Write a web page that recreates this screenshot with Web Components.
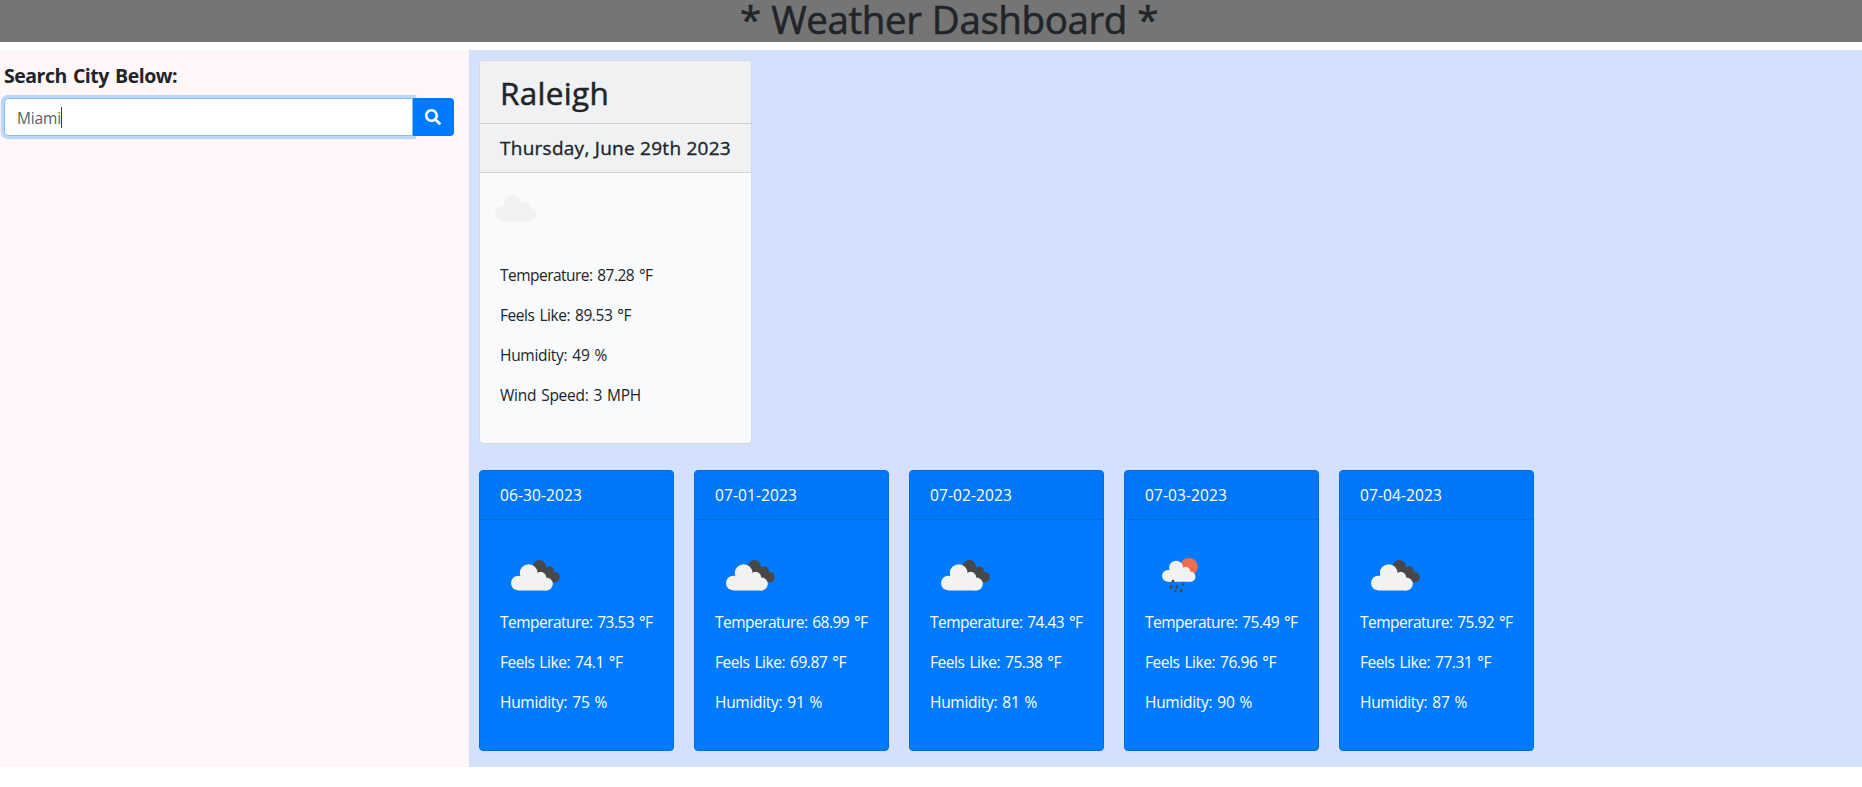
<!DOCTYPE html>
<html lang="en">
<head>
<meta charset="utf-8">
<title>Weather Dashboard</title>
<style>
html,body{margin:0;padding:0;background:#fff;height:787px;overflow:hidden}
body{font:400 16px/24px "Open Sans","Noto Sans",sans-serif;color:#212529}
</style>
</head>
<body>
<weather-app></weather-app>
<script>
// Single line of text whose tracking is adjusted to a set advance width.
class FitText extends HTMLElement{
  connectedCallback(){
    const r=this.attachShadow({mode:'open'});
    r.innerHTML='<style>:host{display:block;white-space:nowrap;word-spacing:var(--gap,.08em)}span{display:inline-block}</style><span><slot></slot></span>';
    const s=r.querySelector('span'),w=+this.getAttribute('w');
    if(w){const n=this.textContent.length;s.style.letterSpacing=((w-s.getBoundingClientRect().width)/n).toFixed(4)+'px';}
  }
}
customElements.define('fit-text',FitText);

const CLOUD='<g fill="#f2f2f0"><circle cx="115" cy="114" r="22"/><circle cx="146" cy="84" r="26.5"/><circle cx="182" cy="97" r="16.5"/><circle cx="199" cy="117" r="19.5"/><path d="M115 95L140 80L182 95L200 105V136.500H115Z"/></g>';
// Origin of each icon's 210-unit drawing window.
const WINDOWS={cloud:'90 51.500 210 210',broken:'60 -15 210 210',rain:'15 -15 210 210'};
class WeatherIcon extends HTMLElement{
  connectedCallback(){
    const k=this.getAttribute('kind');
    let art=CLOUD;
    if(k==='broken')art='<g fill="#48484a"><circle cx="178" cy="65" r="20"/><circle cx="208" cy="78" r="14"/><circle cx="224" cy="96" r="15.500"/><path d="M170 60L210 72L228 90L224 111.500H195Z"/></g>'+CLOUD;
    if(k==='rain'){
      const d=[[99,108,8],[93,126,12],[111,126,11],[130,118,8],[106,138,8],[123.500,137,11]].map(([x,y,h])=>`<rect x="${x-3.500}" y="${y-h/2}" width="7" height="${h}" rx="2.500" transform="rotate(22 ${x} ${y})"/>`).join('');
      art='<circle cx="147" cy="65" r="26.500" fill="#ec6e4c"/><g transform="translate(-8.400 1.400) scale(.8)">'+CLOUD+'</g><g fill="#48484a">'+d+'</g>';
    }
    this.attachShadow({mode:'open'}).innerHTML=`<style>:host{display:block;height:70px}svg{display:block;width:70px;height:70px;overflow:visible}</style><svg viewBox="${WINDOWS[k]}">${art}</svg>`;
  }
}
customElements.define('weather-icon',WeatherIcon);

class SearchBox extends HTMLElement{
  connectedCallback(){
    this.attachShadow({mode:'open'}).innerHTML=`<style>
    :host{display:block;padding:14px 15px 0 4px}
    .label{font-size:19.500px;font-weight:700;line-height:24px;margin-bottom:10px}
    .group{display:flex;height:38px}
    .field{flex:1;box-sizing:border-box;background:#fff;border:1px solid #80bdff;border-radius:4px 0 0 4px;box-shadow:0 0 0 3.200px rgba(0,123,255,.25);padding:7px 12px 5px;color:#5b6168;display:flex;font-size:15.500px}
    .caret{width:1px;height:21px;background:#343a40;margin-top:1px}
    button{position:relative;width:41px;padding:0 1px 0 0;border:0;background:#007bff;border-radius:0 4px 4px 0;display:flex;align-items:center;justify-content:center}
    </style><fit-text class="label" w="173">Search City Below:</fit-text>
    <div class="group"><div class="field"><fit-text w="44">Miami</fit-text><i class="caret"></i></div>
    <button aria-label="Search"><svg width="16" height="16" viewBox="0 0 512 512" fill="#fff"><path d="M505 442.700L405.300 343c-4.500-4.500-10.600-7-17-7H372c27.600-35.300 44-79.700 44-128C416 93.100 322.900 0 208 0S0 93.100 0 208s93.100 208 208 208c48.300 0 92.700-16.400 128-44v16.300c0 6.400 2.500 12.500 7 17l99.700 99.700c9.400 9.400 24.600 9.400 33.900 0l28.300-28.300c9.400-9.400 9.400-24.600.1-34zM208 336c-70.700 0-128-57.200-128-128 0-70.700 57.200-128 128-128 70.700 0 128 57.200 128 128 0 70.700-57.200 128-128 128z"/></svg></button></div>`;
  }
}
customElements.define('search-box',SearchBox);

class CurrentCard extends HTMLElement{
  connectedCallback(){
    this.attachShadow({mode:'open'}).innerHTML=`<style>
    :host{display:block;box-sizing:border-box;width:273px;height:384px;border:1px solid #d5d8dc;border-radius:4px;background:#f8fafc;overflow:hidden}
    .head{background:#f0f1f3;border-bottom:1px solid #d0d2d4;padding:12px 20px}
    .city{font-size:31.500px;line-height:39px;height:38px;-webkit-text-stroke:.5px currentColor}
    .date{--gap:0em;font-size:19px;line-height:25px;height:24px;-webkit-text-stroke:.35px currentColor}
    .body{padding:20px}
    weather-icon{margin-left:-6px}
    ::slotted(fit-text){margin-bottom:16px;font-size:15.500px}
    </style><div class="head"><fit-text class="city" w="109">Raleigh</fit-text></div>
    <div class="head"><fit-text class="date" w="231">Thursday, June 29th 2023</fit-text></div>
    <div class="body"><weather-icon kind="cloud"></weather-icon><slot></slot></div>`;
  }
}
customElements.define('current-card',CurrentCard);

class ForecastCard extends HTMLElement{
  connectedCallback(){
    const a=n=>this.getAttribute(n);
    this.attachShadow({mode:'open'}).innerHTML=`<style>
    :host{display:block;box-sizing:border-box;width:195px;height:281px;border:1px solid #006ce0;border-radius:4px;background:#007bff;color:#fff;overflow:hidden;font-size:15.500px}
    .head{background:#0077f7;border-bottom:1px solid #006ce0;padding:12px 20px}
    .body{padding:20px}
    .row{margin-bottom:16px}
    </style><div class="head"><fit-text w="82">${a('date')}</fit-text></div>
    <div class="body"><weather-icon kind="${a('icon')}"></weather-icon>
    <fit-text class="row" w="152.500">Temperature: ${a('temp')} °F</fit-text>
    <fit-text class="row" w="${a('feels').length>4?131:122.500}">Feels Like: ${a('feels')} °F</fit-text>
    <fit-text class="row" w="107">Humidity: ${a('hum')} %</fit-text></div>`;
  }
}
customElements.define('forecast-card',ForecastCard);

class WeatherApp extends HTMLElement{
  connectedCallback(){
    this.attachShadow({mode:'open'}).innerHTML=`<style>
    :host{display:block}
    header{height:42px;background:#757575;display:flex;justify-content:center;box-sizing:border-box;padding-left:36px;margin-bottom:8px}
    header fit-text{--gap:.02em;font-size:38.500px;line-height:39px;-webkit-text-stroke:.6px currentColor}
    main{display:grid;grid-template-columns:469px 1fr;height:717px}
    aside{background:#fff6f7}
    section{background:#d3e1ff;padding:10px}
    .days{display:flex;gap:20px;margin-top:26px}
    </style><header><fit-text w="418">* Weather Dashboard *</fit-text></header>
    <main><aside><search-box></search-box></aside><section>
    <current-card>
      <fit-text w="152.500">Temperature: 87.28 °F</fit-text><fit-text w="131">Feels Like: 89.53 °F</fit-text>
      <fit-text w="107">Humidity: 49 %</fit-text><fit-text w="141">Wind Speed: 3 MPH</fit-text>
    </current-card>
    <div class="days">
    <forecast-card date="06-30-2023" icon="broken" temp="73.53" feels="74.1" hum="75"></forecast-card>
    <forecast-card date="07-01-2023" icon="broken" temp="68.99" feels="69.87" hum="91"></forecast-card>
    <forecast-card date="07-02-2023" icon="broken" temp="74.43" feels="75.38" hum="81"></forecast-card>
    <forecast-card date="07-03-2023" icon="rain" temp="75.49" feels="76.96" hum="90"></forecast-card>
    <forecast-card date="07-04-2023" icon="broken" temp="75.92" feels="77.31" hum="87"></forecast-card>
    </div></section></main>`;
  }
}
customElements.define('weather-app',WeatherApp);
</script>
</body>
</html>
